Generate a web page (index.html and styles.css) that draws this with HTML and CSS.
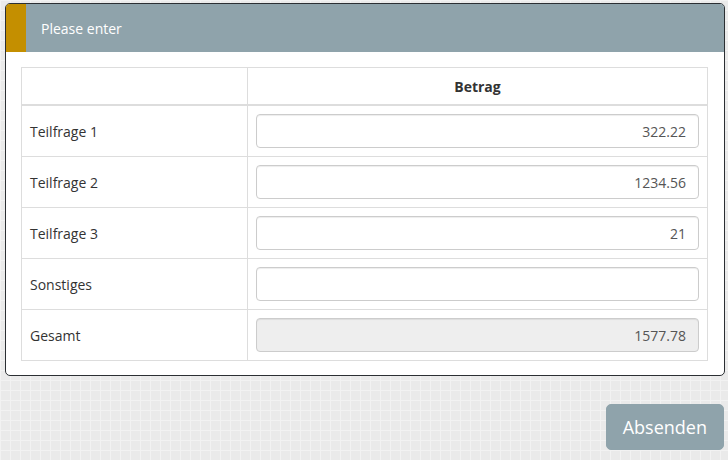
FILE: index.html
```html
<!DOCTYPE html>
<html>
<head>
<meta charset="utf-8">
<link rel="stylesheet" href="styles.css">
</head>
<body>
<div class="page">
  <div class="dialog">
    <div class="dialog-header">
      <span class="accent"></span>
      <span class="title">Please enter</span>
    </div>
    <div class="dialog-body">
      <table class="grid">
        <thead>
          <tr><th class="col-label"></th><th>Betrag</th></tr>
        </thead>
        <tbody>
          <tr><td class="label">Teilfrage 1</td><td><div class="field">322.22</div></td></tr>
          <tr><td class="label">Teilfrage 2</td><td><div class="field">1234.56</div></td></tr>
          <tr><td class="label">Teilfrage 3</td><td><div class="field">21</div></td></tr>
          <tr><td class="label">Sonstiges</td><td><div class="field"></div></td></tr>
          <tr><td class="label">Gesamt</td><td><div class="field readonly">1577.78</div></td></tr>
        </tbody>
      </table>
    </div>
  </div>
  <div class="actions">
    <button class="btn">Absenden</button>
  </div>
</div>
</body>
</html>
```

FILE: styles.css
```css
html, body {
  margin: 0;
  padding: 0;
}
body {
  width: 728px;
  height: 460px;
  overflow: hidden;
  font-family: "Open Sans", "Noto Sans", sans-serif;
  font-size: 14px;
  color: #333;
  background-color: #eaeaea;
  background-image:
    linear-gradient(to right, #f2f2f2 1px, transparent 1px),
    linear-gradient(to bottom, #f2f2f2 1px, transparent 1px);
  background-size: 10px 10px;
}
.page {
  padding: 3px 3px 0 5px;
}
.dialog {
  width: 718px;
  border: 1px solid #2b2f33;
  border-radius: 5px;
  background: #fff;
  overflow: hidden;
}
.dialog-header {
  display: flex;
  align-items: center;
  height: 48px;
  background: #8fa3ab;
}
.accent {
  width: 20px;
  align-self: stretch;
  background: #c48f00;
}
.title {
  margin-left: 15px;
  color: #fff;
  font-size: 14px;
}
.dialog-body {
  padding: 15px 16px 14px 15px;
}
.grid {
  width: 100%;
  border-collapse: collapse;
  border: 1px solid #ddd;
}
.grid th, .grid td {
  border: 1px solid #ddd;
  padding: 8px;
  line-height: 20px;
  text-align: left;
  vertical-align: middle;
}
.grid th {
  text-align: center;
  font-weight: bold;
  border-bottom-width: 2px;
  padding: 9px 8px 7px;
}
.grid td.label {
  padding: 10px 8px 8px;
}
.grid .col-label {
  width: 209px;
}
.field {
  height: 32px;
  border: 1px solid #ccc;
  border-radius: 4px;
  padding: 0 12px;
  line-height: 33px;
  text-align: right;
  color: #555;
  background: #fff;
  box-shadow: inset 0 1px 1px rgba(0,0,0,0.075);
}
.field.readonly {
  background: #eee;
}
.actions {
  display: flex;
  justify-content: flex-end;
  margin-top: 28px;
  padding-right: 1px;
}
.btn {
  font-family: "Open Sans", "Noto Sans", sans-serif;
  font-size: 18px;
  color: #fff;
  background: #8fa3ab;
  border: 1px solid #8fa3ab;
  border-radius: 5px;
  height: 46px;
  padding: 0 16px;
  line-height: 1;
}
```
